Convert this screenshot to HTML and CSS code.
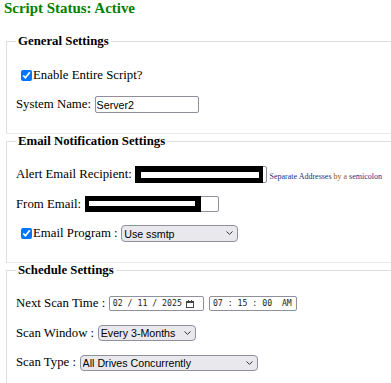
FILE: index.html
```html
<!DOCTYPE html>
<html lang="en">
<head>
    <meta charset="UTF-8">
    <meta name="viewport" content="width=device-width, initial-scale=1.0">
    <title>Script Settings</title>
    <link rel="stylesheet" href="styles.css">
</head>
<body>
    <div class="script-status">Script Status: Active</div>

    <form id="settingsForm">
        <fieldset>
            <legend>General Settings</legend>
            <div class="row">
                <label class="check"><input type="checkbox" name="enable_script" checked>Enable Entire Script?</label>
            </div>
            <div class="row">
                <label for="systemName">System Name:</label>
                <input type="text" id="systemName" class="text-input name-input" value="Server2">
            </div>
        </fieldset>

        <fieldset>
            <legend>Email Notification Settings</legend>
            <div class="row">
                <label>Alert Email Recipient:</label>
                <span class="text-input redacted alert-input"><span class="blackout"><span class="bar"></span></span></span>
                <span class="hint"><span class="hint-blue">Separate Addresses</span> <span class="hint-brown">by a</span> <span class="hint-blue">semicolon</span></span>
            </div>
            <div class="row">
                <label>From Email:</label>
                <span class="text-input redacted from-input"><span class="blackout"><span class="bar"></span></span></span>
            </div>
            <div class="row">
                <label class="check"><input type="checkbox" name="email_program" checked>Email Program :</label>
                <span class="select-wrap">
                    <select class="program-select">
                        <option>Use ssmtp</option>
                        <option>Use sendmail</option>
                    </select>
                    <svg class="chevron" width="7" height="4" viewBox="0 0 7 4"><path d="M0.5 0.5 L3.5 3.3 L6.5 0.5" fill="none" stroke="#333" stroke-width="1"/></svg>
                </span>
            </div>
        </fieldset>

        <fieldset>
            <legend>Schedule Settings</legend>
            <div class="row">
                <label>Next Scan Time :</label>
                <span class="field date-field">
                    <span>02 / 11 / 2025</span>
                    <svg width="8" height="8" viewBox="0 0 8 8"><rect x="0.5" y="1.5" width="7" height="6" fill="none" stroke="#444"/><rect x="0.5" y="1.5" width="7" height="1.5" fill="#444"/><rect x="2" y="0" width="1" height="2" fill="#444"/><rect x="5" y="0" width="1" height="2" fill="#444"/></svg>
                </span>
                <span class="field time-field">07 : 15 : 00  AM</span>
            </div>
            <div class="row">
                <label>Scan Window :</label>
                <span class="select-wrap">
                    <select class="window-select">
                        <option>Every 3-Months</option>
                        <option>Every Month</option>
                    </select>
                    <svg class="chevron" width="7" height="4" viewBox="0 0 7 4"><path d="M0.5 0.5 L3.5 3.3 L6.5 0.5" fill="none" stroke="#333" stroke-width="1"/></svg>
                </span>
            </div>
            <div class="row">
                <label>Scan Type :</label>
                <span class="select-wrap">
                    <select class="type-select">
                        <option>All Drives Concurrently</option>
                        <option>One Drive at a Time</option>
                    </select>
                    <svg class="chevron" width="7" height="4" viewBox="0 0 7 4"><path d="M0.5 0.5 L3.5 3.3 L6.5 0.5" fill="none" stroke="#333" stroke-width="1"/></svg>
                </span>
            </div>
        </fieldset>
    </form>
</body>
</html>
```

FILE: styles.css
```css
html {
    overflow: hidden;
}
body {
    margin: 0 4px;
    width: 480px;
    background-color: #fff;
    color: #000;
    font-family: 'Liberation Serif', 'Times New Roman', serif;
    font-size: 12.8px;
}
.script-status {
    color: #008000;
    font-size: 14.93px;
    font-weight: bold;
    line-height: 17px;
    margin-bottom: 17px;
}
fieldset {
    margin: 0 2px;
    padding: 17px 9px 19px;
    border: 1px solid #dedede;
    border-right-color: #e9e9e9;
    border-bottom-color: #e9e9e9;
    display: flex;
    flex-direction: column;
    gap: 11.5px;
}
legend {
    font-weight: bold;
    line-height: 15px;
    padding: 0 2px;
}
.row {
    display: flex;
    align-items: center;
    gap: 3.6px;
    height: 18px;
    line-height: 15px;
}
.check {
    display: flex;
    align-items: center;
    gap: 1px;
}
.check input {
    width: 11px;
    height: 11px;
    margin: 0 0 0 5px;
    accent-color: #0075ff;
}
.text-input {
    box-sizing: border-box;
    height: 17px;
    border: 1px solid #8f8f9d;
    border-radius: 2px;
    padding: 0 1px;
    background-color: #fff;
    font-family: 'Liberation Sans', Arial, sans-serif;
    font-size: 10.67px;
    color: #000;
}
.name-input {
    width: 104px;
}
.redacted {
    display: flex;
    padding: 0;
}
.blackout {
    display: block;
    box-sizing: border-box;
    margin: -1px 0 -1px -1px;
    background-color: #000;
}
.bar {
    display: block;
    background-color: #fff;
}
.alert-input {
    width: 132px;
}
.alert-input .blackout {
    width: 128px;
    padding: 6px 4px 5px 6px;
}
.alert-input .bar {
    height: 6px;
}
.from-input {
    width: 134px;
    height: 16px;
}
.from-input .blackout {
    width: 116px;
    padding: 5px 6px 5px 4px;
}
.from-input .bar {
    height: 5px;
}
.hint {
    font-size: 8px;
    line-height: 9px;
    margin-left: -1.5px;
    padding-top: 3px;
    white-space: nowrap;
}
.hint-blue {
    color: #1c2f86;
}
.hint-brown {
    color: #a0520a;
}
.select-wrap {
    position: relative;
    display: flex;
}
select {
    appearance: none;
    box-sizing: border-box;
    height: 16px;
    margin: 0;
    padding: 0 0 0 2px;
    border: 1px solid #8f8f9d;
    border-radius: 4px;
    background-color: #e9e9ed;
    color: #000;
    font-family: 'Liberation Sans', Arial, sans-serif;
    font-size: 10.67px;
    line-height: 14px;
}
.select-wrap .chevron {
    position: absolute;
    right: 5px;
    top: 6px;
    pointer-events: none;
}
.program-select {
    width: 117px;
    height: 17px;
}
.window-select {
    width: 98px;
}
.type-select {
    width: 178px;
}
.field {
    box-sizing: border-box;
    display: flex;
    align-items: center;
    height: 15px;
    border: 1px solid #8f8f9d;
    border-radius: 2px;
    background-color: #fff;
    font-family: 'DejaVu Sans Mono', monospace;
    font-size: 8.2px;
    color: #222;
    white-space: pre;
}
.date-field {
    width: 95px;
    padding: 0 9px 0 3px;
    justify-content: space-between;
}
.time-field {
    width: 88px;
    padding: 0 3px;
    margin-left: 1.5px;
}
```
